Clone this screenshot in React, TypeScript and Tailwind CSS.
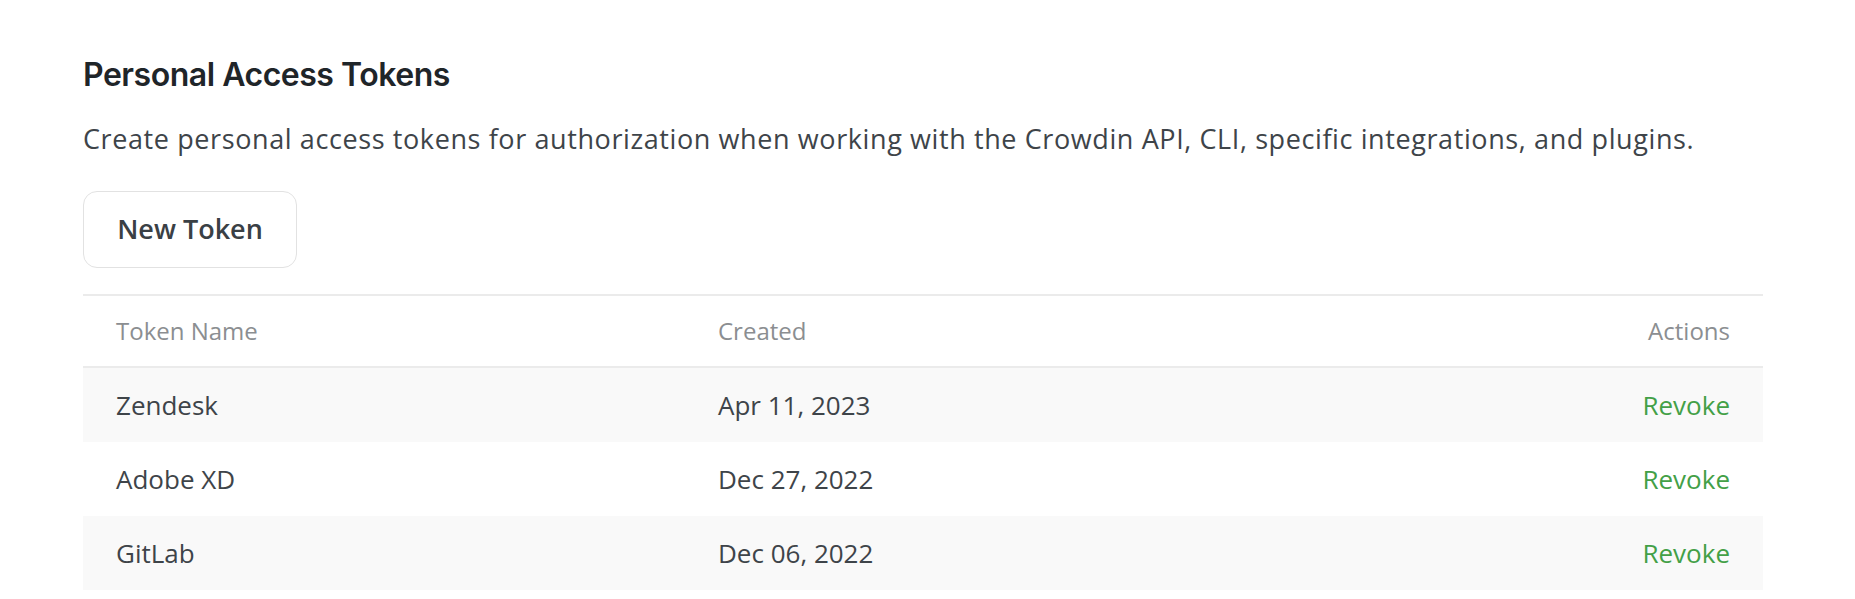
import React from "react";

const rows = [
  { name: "Zendesk", created: "Apr 11, 2023" },
  { name: "Adobe XD", created: "Dec 27, 2022" },
  { name: "GitLab", created: "Dec 06, 2022" },
];

export default function App() {
  return (
    <div className="min-h-[599px] w-full bg-white pl-[83px] pt-[55px] font-['Open_Sans',sans-serif]">
      <h1 className="font-['Inter',sans-serif] text-[32px] leading-[40px] font-semibold tracking-[-0.015em] text-[#1f2529]">
        Personal Access Tokens
      </h1>
      <p className="mt-[26px] text-[27px] leading-[36px] tracking-[0.6px] text-[#3e4449]">
        Create personal access tokens for authorization when working with the Crowdin API, CLI, specific integrations, and plugins.
      </p>
      <button className="mt-[34px] flex h-[77px] w-[214px] items-center justify-center rounded-[14px] border border-[#e2e2e2] bg-white text-[27px] font-semibold text-[#3a4045]">
        New Token
      </button>
      <div className="mt-[26px] w-[1680px]">
        <div className="grid h-[74px] grid-cols-[635px_1fr_auto] items-center border-y-2 border-[#ebebeb] text-[24px] text-[#8b8e91]">
          <div className="pl-[33px]">Token Name</div>
          <div>Created</div>
          <div className="pr-[33px] text-right">Actions</div>
        </div>
        {rows.map((r, i) => (
          <div
            key={r.name}
            className={`grid h-[74px] grid-cols-[635px_1fr_auto] items-center text-[26px] text-[#3e4449] ${
              i % 2 === 0 ? "bg-[#f9f9f9]" : "bg-white"
            }`}
          >
            <div className="pl-[33px]">{r.name}</div>
            <div>{r.created}</div>
            <div className="pr-[33px] text-right text-[#43a047]">Revoke</div>
          </div>
        ))}
      </div>
    </div>
  );
}
